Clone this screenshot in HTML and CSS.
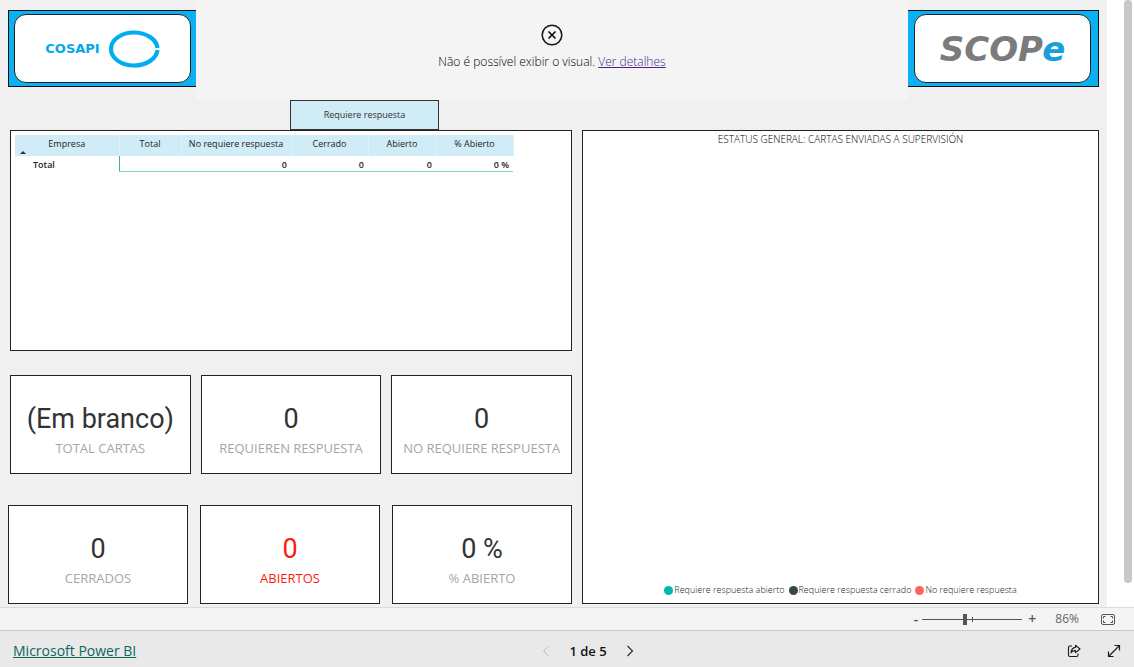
FILE: index.html
```html
<!DOCTYPE html>
<html lang="pt-BR">
<head>
<meta charset="utf-8">
<meta name="viewport" content="width=device-width, initial-scale=1">
<title>Microsoft Power BI</title>
<link rel="stylesheet" href="styles.css">
</head>
<body>
<div class="viewport">
  <main class="report">
    <header class="banner">
      <div class="brand brand-left">
        <div class="brand-plate">
          <span class="cosapi">COSAPI</span>
          <svg class="ring" width="52" height="38" viewBox="0 0 52 38" aria-hidden="true">
            <path d="M49.500 18C48.500 9 38 2.500 26 2.500C13 2.500 3 10 3 19S13 35.500 26 35.500C38 35.500 48.500 29 49.500 20" fill="none" stroke="#00aeef" stroke-width="4.200"/>
          </svg>
        </div>
      </div>
      <div class="notice">
        <svg width="22" height="22" viewBox="0 0 22 22" aria-hidden="true">
          <circle cx="11" cy="11" r="9.800" fill="none" stroke="#111" stroke-width="1.500"/>
          <path d="M7.500 7.500l7 7M14.500 7.500l-7 7" stroke="#111" stroke-width="1.700"/>
        </svg>
        <p class="notice-text">Não é possível exibir o visual. <a class="details" href="#detalhes">Ver detalhes</a></p>
      </div>
      <div class="brand brand-right">
        <div class="brand-plate">
          <span class="scope">SCOP<span class="scope-e">e</span></span>
        </div>
      </div>
    </header>

    <div class="slicer"><button class="slicer-button" type="button">Requiere respuesta</button></div>

    <div class="board">
      <div class="left">
        <section class="panel table-panel">
          <table class="matrix">
            <colgroup><col class="c-company"><col class="c-total"><col class="c-none"><col class="c-closed"><col class="c-open"><col class="c-percent"></colgroup>
            <thead>
              <tr><th class="sorted" scope="col">Empresa</th><th scope="col">Total</th><th scope="col">No requiere respuesta</th><th scope="col">Cerrado</th><th scope="col">Abierto</th><th scope="col">% Abierto</th></tr>
            </thead>
            <tbody>
              <tr><th scope="row">Total</th><td class="first"></td><td>0</td><td>0</td><td>0</td><td>0 %</td></tr>
            </tbody>
          </table>
        </section>
        <div class="cards cards-top">
          <section class="panel card"><div class="value">(Em branco)</div><div class="label">TOTAL CARTAS</div></section>
          <section class="panel card"><div class="value">0</div><div class="label">REQUIEREN RESPUESTA</div></section>
          <section class="panel card"><div class="value">0</div><div class="label">NO REQUIERE RESPUESTA</div></section>
        </div>
        <div class="cards">
          <section class="panel card"><div class="value">0</div><div class="label">CERRADOS</div></section>
          <section class="panel card alert"><div class="value">0</div><div class="label">ABIERTOS</div></section>
          <section class="panel card"><div class="value">0 %</div><div class="label">% ABIERTO</div></section>
        </div>
      </div>
      <section class="panel chart">
        <h2 class="chart-title">ESTATUS GENERAL: CARTAS ENVIADAS A SUPERVISIÓN</h2>
        <ul class="legend">
          <li><i class="dot teal"></i>Requiere respuesta abierto</li>
          <li><i class="dot slate"></i>Requiere respuesta cerrado</li>
          <li><i class="dot coral"></i>No requiere respuesta</li>
        </ul>
      </section>
    </div>
  </main>
  <div class="rail"><div class="thumb"></div></div>
</div>

<div class="zoombar">
  <button class="plain" type="button" aria-label="Reduzir">-</button>
  <input class="zoom" type="range" min="0" max="100" value="42" aria-label="Zoom">
  <button class="plain plus" type="button" aria-label="Ampliar">+</button>
  <span class="percent">86%</span>
  <button class="plain" type="button" aria-label="Ajustar à página">
    <svg width="14" height="11" viewBox="0 0 14 11" fill="none" stroke="#555" aria-hidden="true">
      <rect x=".5" y=".5" width="13" height="10" rx="1.500"/>
      <path d="M4.500 2.500h-2v2M9.500 2.500h2v2M2.500 6.500v2h2M11.500 6.500v2h-2"/>
    </svg>
  </button>
</div>

<footer class="footer">
  <a class="home" href="#powerbi">Microsoft Power BI</a>
  <nav class="pager" aria-label="Páginas">
    <button class="plain" type="button" aria-label="Página anterior" disabled><svg width="8" height="12" viewBox="0 0 8 12" fill="none" stroke="#bdbdbd" aria-hidden="true"><path d="M6.500 1L1.500 6l5 5"/></svg></button>
    <span class="page">1 de 5</span>
    <button class="plain" type="button" aria-label="Próxima página"><svg width="8" height="12" viewBox="0 0 8 12" fill="none" stroke="#333" stroke-width="1.200" aria-hidden="true"><path d="M1.500 1l5 5-5 5"/></svg></button>
  </nav>
  <div class="actions">
    <button class="plain" type="button" aria-label="Compartilhar"><svg width="14" height="14" viewBox="0 0 14 14" fill="none" stroke="#1b1b1b" stroke-width="1.100" stroke-linejoin="round" aria-hidden="true"><path d="M5 2H3Q1.500 2 1.500 3.500V11Q1.500 12.500 3 12.500H9.500Q11 12.500 11 11V9.500"/><path d="M8.500 1.200L13 5 8.500 8.700V6.600Q5.500 6.400 4 8.800Q4.400 3.800 8.500 3.400Z"/></svg></button>
    <button class="plain" type="button" aria-label="Tela inteira"><svg width="14" height="14" viewBox="0 0 14 14" fill="none" stroke="#1b1b1b" stroke-width="1.200" aria-hidden="true"><path d="M1.500 12.500l11-11M7.500 1.500h5v5M1.500 7.500v5h5"/></svg></button>
  </div>
</footer>
</body>
</html>
```

FILE: styles.css
```css
* { box-sizing: border-box; }

body {
  margin: 0;
  min-height: 100vh;
  display: flex;
  flex-direction: column;
  font-family: "Open Sans", "Noto Sans", sans-serif;
  background: #fff;
  color: #252423;
}

.viewport { flex: 1; display: flex; }

.report {
  flex: 1;
  display: flex;
  flex-direction: column;
  padding: 0 8px 3px;
  background: #f0f0f0;
}

.rail {
  width: 27px;
  display: flex;
  justify-content: flex-end;
  padding-right: 2px;
}
.thumb { width: 8px; height: 96%; border-radius: 4px; background: #c8c8c8; }

/* Banner */
.banner { display: grid; grid-template-columns: 188px 1fr 191px; min-height: 100px; }
.brand {
  display: flex;
  align-self: start;
  height: 77px;
  margin-top: 10px;
  padding: 3px 5px;
  background: #0bb0f0;
  border: 1px solid #111;
}
.brand-left { border-right: 0; }
.brand-right { border-left: 0; padding: 3px 7px 3px 6px; }
.brand-plate {
  flex: 1;
  display: flex;
  align-items: center;
  justify-content: center;
  gap: 8px;
  background: #fff;
  border: 1px solid #222;
  border-radius: 12px;
}
.cosapi { font: bold 13px "DejaVu Sans", sans-serif; color: #00a9ec; }
.scope { font: italic bold 34px/1 "DejaVu Sans", sans-serif; color: #7b7b7b; }
.scope-e { color: #169fdb; }

.notice {
  display: flex;
  flex-direction: column;
  align-items: center;
  justify-content: center;
  gap: 7px;
  padding-bottom: 5px;
  background: #f4f4f4;
}
.notice-text { margin: 0; font-size: 12px; line-height: 18px; font-weight: 300; color: #000; }
.details { color: #4b1f8a; }

/* Slicer */
.slicer { display: flex; padding-left: 282px; }
.slicer-button {
  width: 149px;
  height: 30px;
  padding: 0 0 2px;
  border: 1px solid #333;
  background: #cfecf7;
  font: 9px "Open Sans", sans-serif;
  color: #333;
}

/* Board */
.board { flex: 1; display: grid; grid-template-columns: 565fr 517fr; gap: 9px; }
.left { display: flex; flex-direction: column; }
.panel { background: #fff; border: 1px solid #222; }
.table-panel { flex: 1; margin: 0 1px 24px 2px; padding: 4px; }

.matrix { border-collapse: collapse; table-layout: fixed; width: 498px; font-size: 9px; line-height: 12px; }
.c-company { width: 104px; }
.c-total { width: 62px; }
.c-none { width: 110px; }
.c-closed { width: 77px; }
.c-open { width: 68px; }
.c-percent { width: 77px; }
.matrix thead th {
  height: 21px;
  padding: 3px 0 6px;
  font-weight: 400;
  white-space: nowrap;
  background: #cfecf7;
  border-right: 1px solid #dcf2fa;
}
.sorted { position: relative; }
.sorted::after {
  content: "";
  position: absolute;
  left: 5px;
  bottom: 2px;
  border: 3px solid transparent;
  border-top: 0;
  border-bottom-color: #333;
}
.matrix tbody th { padding: 3px 0 0 18px; text-align: left; font-weight: 600; }
.matrix td { padding: 3px 4px 0 0; text-align: right; font-weight: 600; border-bottom: 1px solid #7fd3c8; }
.matrix .first { border-left: 1px solid #3fae9f; }

/* Cards */
.cards { display: grid; grid-template-columns: repeat(3, 1fr); gap: 12px; padding-right: 1px; }
.cards-top { gap: 10px; padding-left: 2px; margin-bottom: 31px; }
.card {
  height: 99px;
  display: flex;
  flex-direction: column;
  align-items: center;
  justify-content: center;
  padding-top: 10px;
  white-space: nowrap;
}
.value { font: 27px/36px Roboto, sans-serif; color: #333; }
.label { font-size: 13px; line-height: 22px; color: #a6a6a6; }
.alert .value, .alert .label { color: #fd1b0d; }

/* Chart */
.chart { display: flex; flex-direction: column; justify-content: space-between; align-items: center; padding-bottom: 7px; }
.chart-title { margin: 0; font-size: 10px; line-height: 16px; font-weight: 300; color: #000; }
.legend { display: flex; gap: 4px; margin: 0; padding: 0; list-style: none; font-size: 9px; line-height: 12px; font-weight: 300; color: #222; }
.legend li { display: flex; align-items: center; gap: 1px; }
.dot { width: 9px; height: 9px; border-radius: 50%; }
.teal { background: #01b8aa; }
.slate { background: #374649; }
.coral { background: #fd625e; }

/* Zoom bar */
.plain { display: flex; padding: 0; border: 0; background: none; font: 600 14px/16px "Open Sans", sans-serif; color: #555; }
.zoombar {
  display: flex;
  align-items: center;
  justify-content: flex-end;
  height: 24px;
  padding-right: 19px;
  background: #f4f4f4;
  border-top: 1px solid #dcdcdc;
  border-bottom: 1px solid #c8c8c8;
}
.zoom {
  appearance: none;
  width: 100px;
  height: 12px;
  margin: 0 6px 0 4px;
  background:
    linear-gradient(#555, #555) 50px 4px / 1px 5px no-repeat,
    linear-gradient(#555, #555) 0 6px / 100% 1px no-repeat;
}
.zoom::-webkit-slider-thumb { appearance: none; width: 4px; height: 11px; background: #555; }
.percent { margin: 0 22px 0 19px; font-size: 12px; line-height: 16px; color: #666; }

/* Footer */
.footer {
  display: grid;
  grid-template-columns: 1fr auto 1fr;
  align-items: center;
  height: 36px;
  padding: 3px 13px 0;
  background: #e9e9e9;
}
.home { justify-self: start; font-size: 14px; line-height: 20px; color: #0d6560; }
.pager { display: flex; align-items: center; gap: 19px; padding-left: 42px; }
.page { font-size: 13px; line-height: 20px; font-weight: 600; color: #111; }
.actions { justify-self: end; display: flex; gap: 26px; }
```
